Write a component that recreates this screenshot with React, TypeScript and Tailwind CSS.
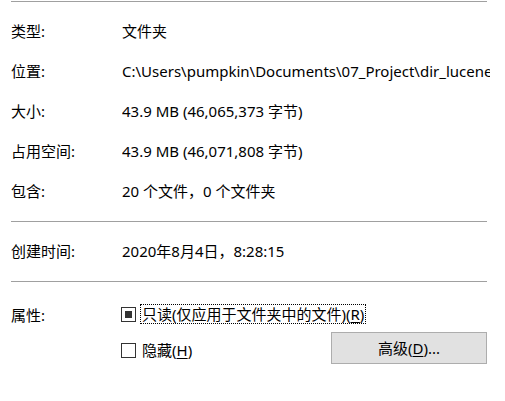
import React from "react";

const font = {
  fontFamily: '"Segoe UI", "Noto Sans", "Noto Sans CJK SC", sans-serif',
};

function Row({ label, value }: { label: string; value: React.ReactNode }) {
  return (
    <div className="flex h-10 items-center whitespace-nowrap">
      <div className="w-[111px] shrink-0">{label}</div>
      <div className="max-w-[368px] overflow-hidden">{value}</div>
    </div>
  );
}

function Sep() {
  return <div className="h-px w-[476px] bg-[#a0a0a0]" />;
}

export default function App() {
  return (
    <div
      className="h-[401px] w-[505px] overflow-hidden bg-white pl-[11px] pt-px text-[15px] leading-5 text-black"
      style={font}
    >
      <Sep />
      <div className="mt-[9px]">
        <Row label="类型:" value="文件夹" />
        <Row
          label="位置:"
          value="C:\Users\pumpkin\Documents\07_Project\dir_lucene"
        />
        <Row label="大小:" value="43.9 MB (46,065,373 字节)" />
        <Row label="占用空间:" value="43.9 MB (46,071,808 字节)" />
        <Row label="包含:" value="20 个文件，0 个文件夹" />
      </div>
      <div className="mt-[10px]">
        <Sep />
      </div>
      <div className="mt-[9px]">
        <Row label="创建时间:" value="2020年8月4日，8:28:15" />
      </div>
      <div className="mt-[10px]">
        <Sep />
      </div>
      <div className="mt-[22px] flex whitespace-nowrap">
        <div className="w-[110px] shrink-0 pt-[1px]">属性:</div>
        <div className="flex w-[366px] flex-col">
          <div className="flex h-[20px] items-center">
            <div className="flex h-[15px] w-[15px] items-center justify-center border border-[#333]">
              <div className="h-[7px] w-[7px] bg-[#333]" />
            </div>
            <div className="ml-[4px] flex h-[20px] items-center border border-dotted border-black pl-[1px] pr-[1px]">
              只读(仅应用于文件夹中的文件)(<span className="underline underline-offset-2">R</span>)
            </div>
          </div>
          <div className="mt-[8px] flex justify-between">
            <div className="mt-[8px] flex h-[20px] items-center">
              <div className="h-[15px] w-[15px] border border-[#333]" />
              <div className="ml-[6px]">
                隐藏(<span className="underline underline-offset-2">H</span>)
              </div>
            </div>
            <div className="flex h-[32px] w-[156px] items-center justify-center border border-[#adadad] bg-[#e1e1e1]">
              高级(<span className="underline underline-offset-2">D</span>)...
            </div>
          </div>
        </div>
      </div>
    </div>
  );
}
